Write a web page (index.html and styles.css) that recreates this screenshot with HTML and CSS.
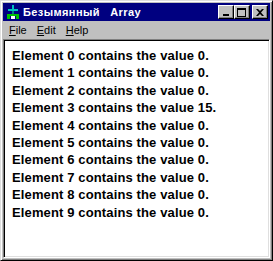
FILE: index.html
```html
<!DOCTYPE html>
<html lang="en">
<head>
    <meta charset="UTF-8">
    <title>Array</title>
    <link rel="stylesheet" href="styles.css">
</head>
<body>
    <div class="window">
        <div class="title-bar">
            <svg class="app-icon" width="16" height="16" viewBox="0 0 16 16">
                <rect x="7" y="1" width="2" height="5" fill="#00c0c0"/>
                <rect x="3" y="5" width="10" height="2" fill="#00c0c0"/>
                <rect x="7" y="7" width="2" height="4" fill="#008080"/>
                <rect x="2" y="10" width="12" height="2" fill="#00c000"/>
                <rect x="2" y="12" width="3" height="3" fill="#00c000"/>
                <rect x="11" y="12" width="3" height="3" fill="#00c000"/>
                <rect x="6" y="12" width="4" height="3" fill="#ffffff"/>
            </svg>
            <span class="title-text">Безымянный&nbsp;&nbsp;&nbsp;Array</span>
            <div class="title-buttons">
                <div class="tb-btn"><span class="min-glyph"></span></div>
                <div class="tb-btn"><span class="max-glyph"></span></div>
                <div class="tb-btn close"><svg width="8" height="7" viewBox="0 0 8 7"><path d="M0 0h2l2 2 2-2h2L5 3.5 8 7H6L4 5 2 7H0l3-3.5z" fill="#000"/></svg></div>
            </div>
        </div>
        <div class="menu-bar">
            <span class="menu-item"><u>F</u>ile</span>
            <span class="menu-item"><u>E</u>dit</span>
            <span class="menu-item"><u>H</u>elp</span>
        </div>
        <div class="client">
            <div class="line">Element 0 contains the value 0.</div>
            <div class="line">Element 1 contains the value 0.</div>
            <div class="line">Element 2 contains the value 0.</div>
            <div class="line">Element 3 contains the value 15.</div>
            <div class="line">Element 4 contains the value 0.</div>
            <div class="line">Element 5 contains the value 0.</div>
            <div class="line">Element 6 contains the value 0.</div>
            <div class="line">Element 7 contains the value 0.</div>
            <div class="line">Element 8 contains the value 0.</div>
            <div class="line">Element 9 contains the value 0.</div>
        </div>
    </div>
</body>
</html>
```

FILE: styles.css
```css
/* Win95-style window */
body {
    margin: 0;
    padding: 0;
    background-color: #c0c0c0;
    font-family: 'Liberation Sans', Arial, sans-serif;
}

.window {
    width: 273px;
    height: 261px;
    box-sizing: border-box;
    background-color: #c0c0c0;
    border: 1px solid;
    border-color: #dfdfdf #000000 #000000 #dfdfdf;
    box-shadow: inset 1px 1px 0 #ffffff, inset -1px -1px 0 #808080;
    padding: 2px;
    display: flex;
    flex-direction: column;
}

.title-bar {
    height: 18px;
    background-color: #000080;
    display: flex;
    align-items: center;
    padding: 0 2px 0 2px;
}

.app-icon {
    flex: none;
}

.title-text {
    color: #ffffff;
    font-weight: bold;
    font-size: 11px;
    letter-spacing: 0.4px;
    margin-left: 2px;
    white-space: nowrap;
}

.title-buttons {
    margin-left: auto;
    display: flex;
}

.tb-btn {
    width: 16px;
    height: 14px;
    box-sizing: border-box;
    background-color: #c0c0c0;
    border: 1px solid;
    border-color: #ffffff #000000 #000000 #ffffff;
    box-shadow: inset -1px -1px 0 #808080;
    display: flex;
    align-items: center;
    justify-content: center;
}

.tb-btn.close {
    margin-left: 2px;
}

.min-glyph {
    width: 6px;
    height: 2px;
    background: #000;
    margin-top: 6px;
    margin-right: 1px;
}

.max-glyph {
    width: 9px;
    height: 9px;
    box-sizing: border-box;
    border: 1px solid #000;
    border-top-width: 2px;
    margin-right: 1px;
}

.menu-bar {
    height: 18px;
    display: flex;
    align-items: center;
    font-size: 11px;
    padding-left: 1px;
}

.menu-item {
    padding: 0 5px;
    color: #000;
}

.client {
    flex: 1;
    background-color: #ffffff;
    border: 1px solid;
    border-color: #808080 #ffffff #ffffff #808080;
    box-shadow: inset 1px 1px 0 #000000, inset -1px -1px 0 #dfdfdf;
    padding: 7px 0 0 8px;
}

.line {
    font-weight: bold;
    font-size: 13px;
    line-height: 17.4px;
    letter-spacing: 0.13px;
    color: #000;
    white-space: nowrap;
}
```
